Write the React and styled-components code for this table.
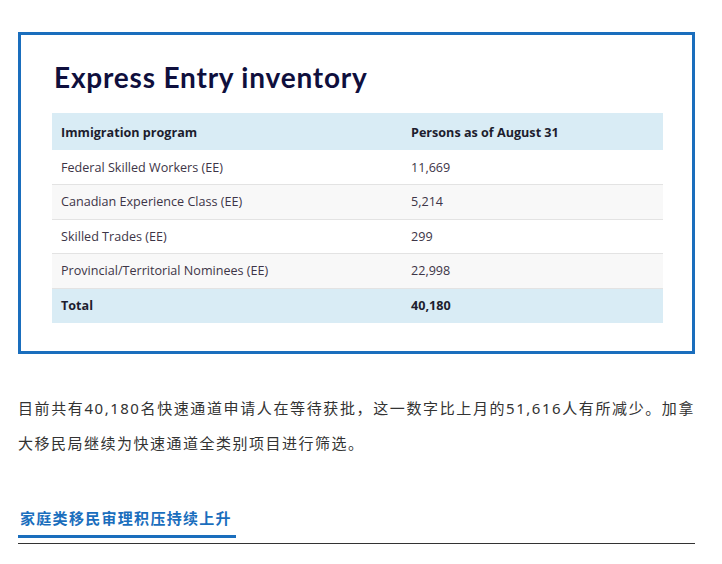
import styled, { createGlobalStyle } from 'styled-components';

const GlobalStyle = createGlobalStyle`
  body {
    margin: 0;
    background: #fff;
    font-family: "Noto Sans", "Noto Sans CJK SC", sans-serif;
  }
`;

const rows = [
  { program: 'Federal Skilled Workers (EE)', count: '11,669' },
  { program: 'Canadian Experience Class (EE)', count: '5,214' },
  { program: 'Skilled Trades (EE)', count: '299' },
  { program: 'Provincial/Territorial Nominees (EE)', count: '22,998' },
];

function App() {
  return (
    <>
      <GlobalStyle />
      <Page>
        <Frame>
          <Title>Express Entry inventory</Title>
          <Table>
            <thead>
              <Row tone="blue" head>
                <HeadCell>Immigration program</HeadCell>
                <HeadCell>Persons as of August 31</HeadCell>
              </Row>
            </thead>
            <tbody>
              {rows.map((r, i) => (
                <Row key={r.program} tone={i % 2 ? 'grey' : 'white'}>
                  <Cell>{r.program}</Cell>
                  <Cell>{r.count}</Cell>
                </Row>
              ))}
              <Row tone="blue">
                <Cell bold>Total</Cell>
                <Cell bold>40,180</Cell>
              </Row>
            </tbody>
          </Table>
        </Frame>
        <Paragraph>
          目前共有40,180名快速通道申请人在等待获批，这一数字比上月的51,616人有所减少。加拿大移民局继续为快速通道全类别项目进行筛选。
        </Paragraph>
        <Section>
          <SectionTitle>家庭类移民审理积压持续上升</SectionTitle>
        </Section>
      </Page>
    </>
  );
}

const Page = styled.div`
  width: 677px;
  padding: 32px 0 0 18px;
`;

const Frame = styled.div`
  border: 3px solid #1a6ebd;
  padding: 24px 29px 28px 31px;
`;

const Title = styled.h2`
  margin: 0 0 18px 2px;
  font-family: Lato, "Noto Sans", sans-serif;
  font-weight: 700;
  font-size: 28px;
  line-height: 36px;
  letter-spacing: 0.8px;
  color: #0f0f3d;
`;

const Table = styled.table`
  width: 100%;
  border-collapse: collapse;
  font-family: "Open Sans", "Noto Sans", sans-serif;
  font-size: 12.6px;
`;

const toneColors = {
  blue: '#d9ecf5',
  grey: '#f8f8f8',
  white: '#ffffff',
};

const Row = styled.tr`
  background: ${(p) => toneColors[p.tone]};
  height: ${(p) => (p.head ? '37px' : '34.5px')};
  & + & {
    border-top: 1px solid #e3e3e3;
  }
`;

const HeadCell = styled.th`
  text-align: left;
  font-weight: 700;
  color: #1d1d2e;
  padding: 2px 9px 0;
  &:first-child {
    width: 332px;
  }
`;

const Cell = styled.td`
  padding: 0 9px;
  color: ${(p) => (p.bold ? '#1d1d2e' : '#3d3547')};
  font-weight: ${(p) => (p.bold ? 700 : 400)};
`;

const Paragraph = styled.p`
  margin: 37px 0 0;
  font-size: 15px;
  line-height: 35px;
  letter-spacing: 1.5px;
  color: #333;
  text-align: justify;
`;

const Section = styled.div`
  margin-top: 45px;
  border-bottom: 1px solid #333;
  padding-bottom: 5px;
`;

const SectionTitle = styled.h3`
  display: inline-block;
  margin: 0;
  padding: 0 4px 5px 2px;
  font-size: 15px;
  line-height: 24px;
  letter-spacing: 1.3px;
  font-weight: 700;
  color: #1a6ebd;
  border-bottom: 3px solid #1a6ebd;
`;

export default App;
